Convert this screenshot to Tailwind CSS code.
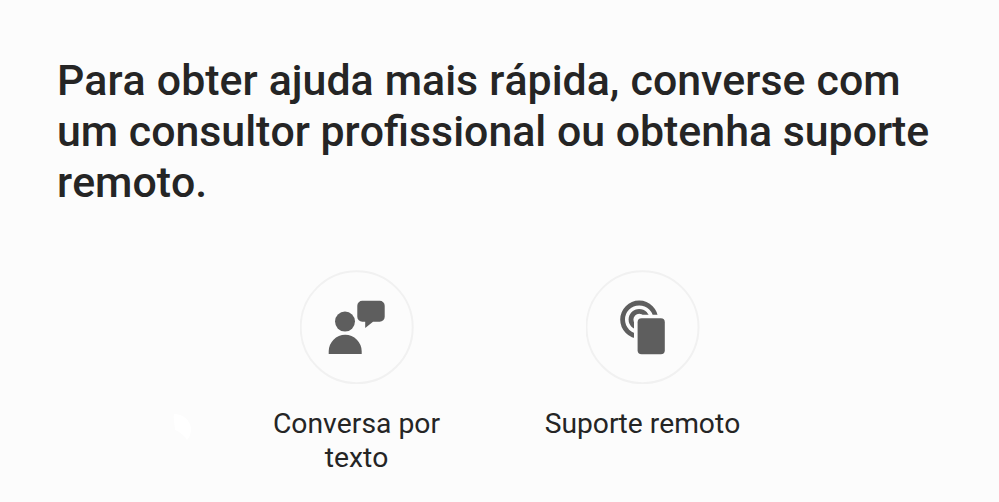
<!DOCTYPE html>
<html lang="pt-BR">
<head>
    <meta charset="UTF-8">
    <meta name="viewport" content="width=device-width, initial-scale=1.0">
    <title>Suporte</title>
    <script src="https://cdn.jsdelivr.net/npm/@tailwindcss/browser@4"></script>
</head>
<body class="bg-[#fcfcfc] font-[Roboto,sans-serif] text-[#252525] [font-kerning:none]">
    <main class="relative h-[502px] w-[999px] overflow-hidden pt-[55px]">
        <h1 class="ml-[57px] w-[900px] text-[42.85px] leading-[51px] font-medium">
            <span class="[word-spacing:0.5px]">Para obter ajuda mais rápida, converse com</span><br>
            um consultor profissional ou obtenha suporte<br>
            remoto.
        </h1>

        <div class="ml-[213.5px] mt-[62px] grid w-[572px] grid-cols-2 text-center">
            <!-- Chat -->
            <a class="flex flex-col items-center">
                <svg class="size-[114px]" viewBox="0 0 114 114">
                    <circle class="fill-none stroke-[#f1f1f1]" cx="56.7" cy="57.2" r="56" stroke-width="2"/>
                    <g class="fill-[#5e5e5e]">
                        <circle cx="45" cy="51.6" r="10"/>
                        <path d="M28.700 83.900v-2.600a16.500 16.500 0 0 1 33 0v2.600z"/>
                        <path d="M62.300 30.800h17.400a5 5 0 0 1 5 5v10.900a5 5 0 0 1-5 5H73l-7.800 6.200v-6.200h-2.900a5 5 0 0 1-5-5V35.800a5 5 0 0 1 5-5z"/>
                    </g>
                </svg>
                <span class="mt-[23px] w-[200px] text-[28.3px] leading-[33.5px]">Conversa por texto</span>
            </a>

            <!-- Remoto -->
            <a class="flex flex-col items-center">
                <svg class="size-[114px]" viewBox="0 0 114 114">
                    <circle class="fill-none stroke-[#f1f1f1]" cx="56.5" cy="57.2" r="56" stroke-width="2"/>
                    <g class="fill-none stroke-[#5e5e5e]" clip-path="url(#waves)">
                        <circle cx="53.2" cy="49.6" r="16.6" stroke-width="4.8"/>
                        <circle cx="53.2" cy="49.6" r="8.2" stroke-width="4.8"/>
                    </g>
                    <rect class="fill-[#5e5e5e]" x="51.6" y="48.3" width="27.2" height="35.9" rx="4"/>
                    <clipPath id="waves">
                        <path d="M30 28h46v16.700H53a5 5 0 0 0-5 5V72H30z"/>
                    </clipPath>
                </svg>
                <span class="mt-[23px] text-[28.2px] leading-[33.5px]">Suporte remoto</span>
            </a>
        </div>

        <svg class="absolute left-[173px] top-[413px] h-[28px] w-[19px] fill-white" viewBox="0 0 19 28">
            <path d="M1 1C10 1 17 7 18 15c0 5-1 9-4 12C11 22 7 19 2 17 2 11 0 6 1 1z"/>
        </svg>
    </main>
</body>
</html>
